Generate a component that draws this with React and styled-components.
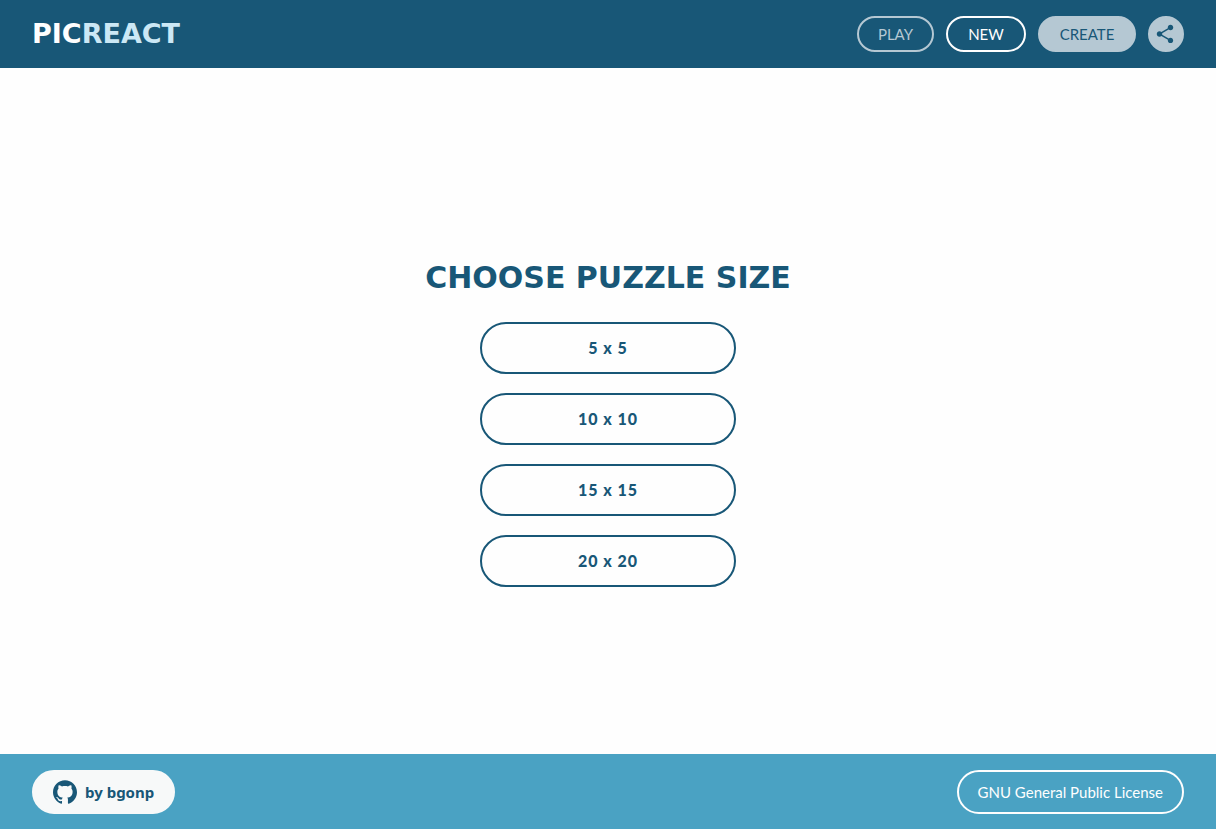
import React from "react";
import styled, { createGlobalStyle, css } from "styled-components";
import { MdShare } from "react-icons/md";
import { SiGithub } from "react-icons/si";

const GlobalStyle = createGlobalStyle`
  * { box-sizing: border-box; }
  body {
    margin: 0;
    background: #fefefe;
    color: #185777;
    font-family: Lato, sans-serif;
    font-size: 15px;
    line-height: 20px;
  }
`;

const displayFont = css`
  font-family: "DejaVu Sans", sans-serif;
  font-weight: 700;
`;

const Page = styled.div`
  min-height: 100vh;
  display: flex;
  flex-direction: column;
`;

const Header = styled.header`
  display: flex;
  align-items: center;
  justify-content: space-between;
  padding: 16px 32px;
  background: #185777;
`;

const Logo = styled.h1`
  ${displayFont}
  margin: 0;
  font-size: 27px;
  line-height: 36px;
  color: #fefefe;
`;

const LogoAccent = styled.span`
  color: #cbe8f5;
`;

const Nav = styled.nav`
  display: flex;
  gap: 12px;
`;

const pill = css`
  display: inline-flex;
  align-items: center;
  justify-content: center;
  border: 2px solid currentColor;
  border-radius: 32px;
  font-family: inherit;
  font-size: 15px;
  line-height: 20px;
  white-space: nowrap;
  cursor: pointer;
`;

const NavButton = styled.button`
  ${pill}
  height: 36px;
  min-width: ${(p) => p.$width};
  padding: 0 16px;
  background: transparent;
  color: ${(p) => (p.$active ? "#fefefe" : "#b5c8d3")};
  ${(p) =>
    p.$filled &&
    css`
      background: #b5c8d3;
      border-color: #b5c8d3;
      color: #185777;
    `}
`;

const ShareButton = styled(NavButton)`
  width: 36px;
  padding: 0 2px 0 0;
`;

const Main = styled.main`
  flex: 1;
  display: flex;
  flex-direction: column;
  align-items: center;
  justify-content: center;
  padding: 22px 16px 0;
`;

const Title = styled.h2`
  ${displayFont}
  margin: 0 0 24px;
  font-size: 30px;
  line-height: 40px;
  text-align: center;
`;

const SizeList = styled.div`
  display: flex;
  flex-direction: column;
  gap: 19px;
  width: 256px;
`;

const SizeButton = styled.button`
  ${pill}
  height: 52px;
  background: transparent;
  color: #185777;
  font-size: 16px;
  font-weight: 900;
  letter-spacing: 1px;
`;

const Footer = styled.footer`
  display: flex;
  align-items: center;
  justify-content: space-between;
  padding: 16px 32px 15px;
  background: #4aa2c3;
`;

const FooterLink = styled.a`
  ${pill}
  gap: 8px;
  height: 44px;
  padding: 0 19px;
  color: #fefefe;
  text-decoration: none;
  ${(p) =>
    p.$filled &&
    css`
      background: #f7f9f9;
      border-color: #f7f9f9;
      color: #185777;
      font-family: "Noto Sans", sans-serif;
      font-weight: 700;
    `}
`;

const sizes = [5, 10, 15, 20];

export default function App() {
  return (
    <>
      <GlobalStyle />
      <Page>
        <Header>
          <Logo>
            PIC<LogoAccent>REACT</LogoAccent>
          </Logo>
          <Nav>
            <NavButton type="button" $width="77px">PLAY</NavButton>
            <NavButton type="button" $width="80px" $active>NEW</NavButton>
            <NavButton type="button" $width="98px" $filled>CREATE</NavButton>
            <ShareButton type="button" $width="36px" $filled aria-label="Share">
              <MdShare size={22} />
            </ShareButton>
          </Nav>
        </Header>
        <Main>
          <Title>CHOOSE PUZZLE SIZE</Title>
          <SizeList>
            {sizes.map((n) => (
              <SizeButton type="button" key={n}>{`${n} x ${n}`}</SizeButton>
            ))}
          </SizeList>
        </Main>
        <Footer>
          <FooterLink href="#author" $filled>
            <SiGithub size={24} />
            by bgonp
          </FooterLink>
          <FooterLink href="#license">GNU General Public License</FooterLink>
        </Footer>
      </Page>
    </>
  );
}
